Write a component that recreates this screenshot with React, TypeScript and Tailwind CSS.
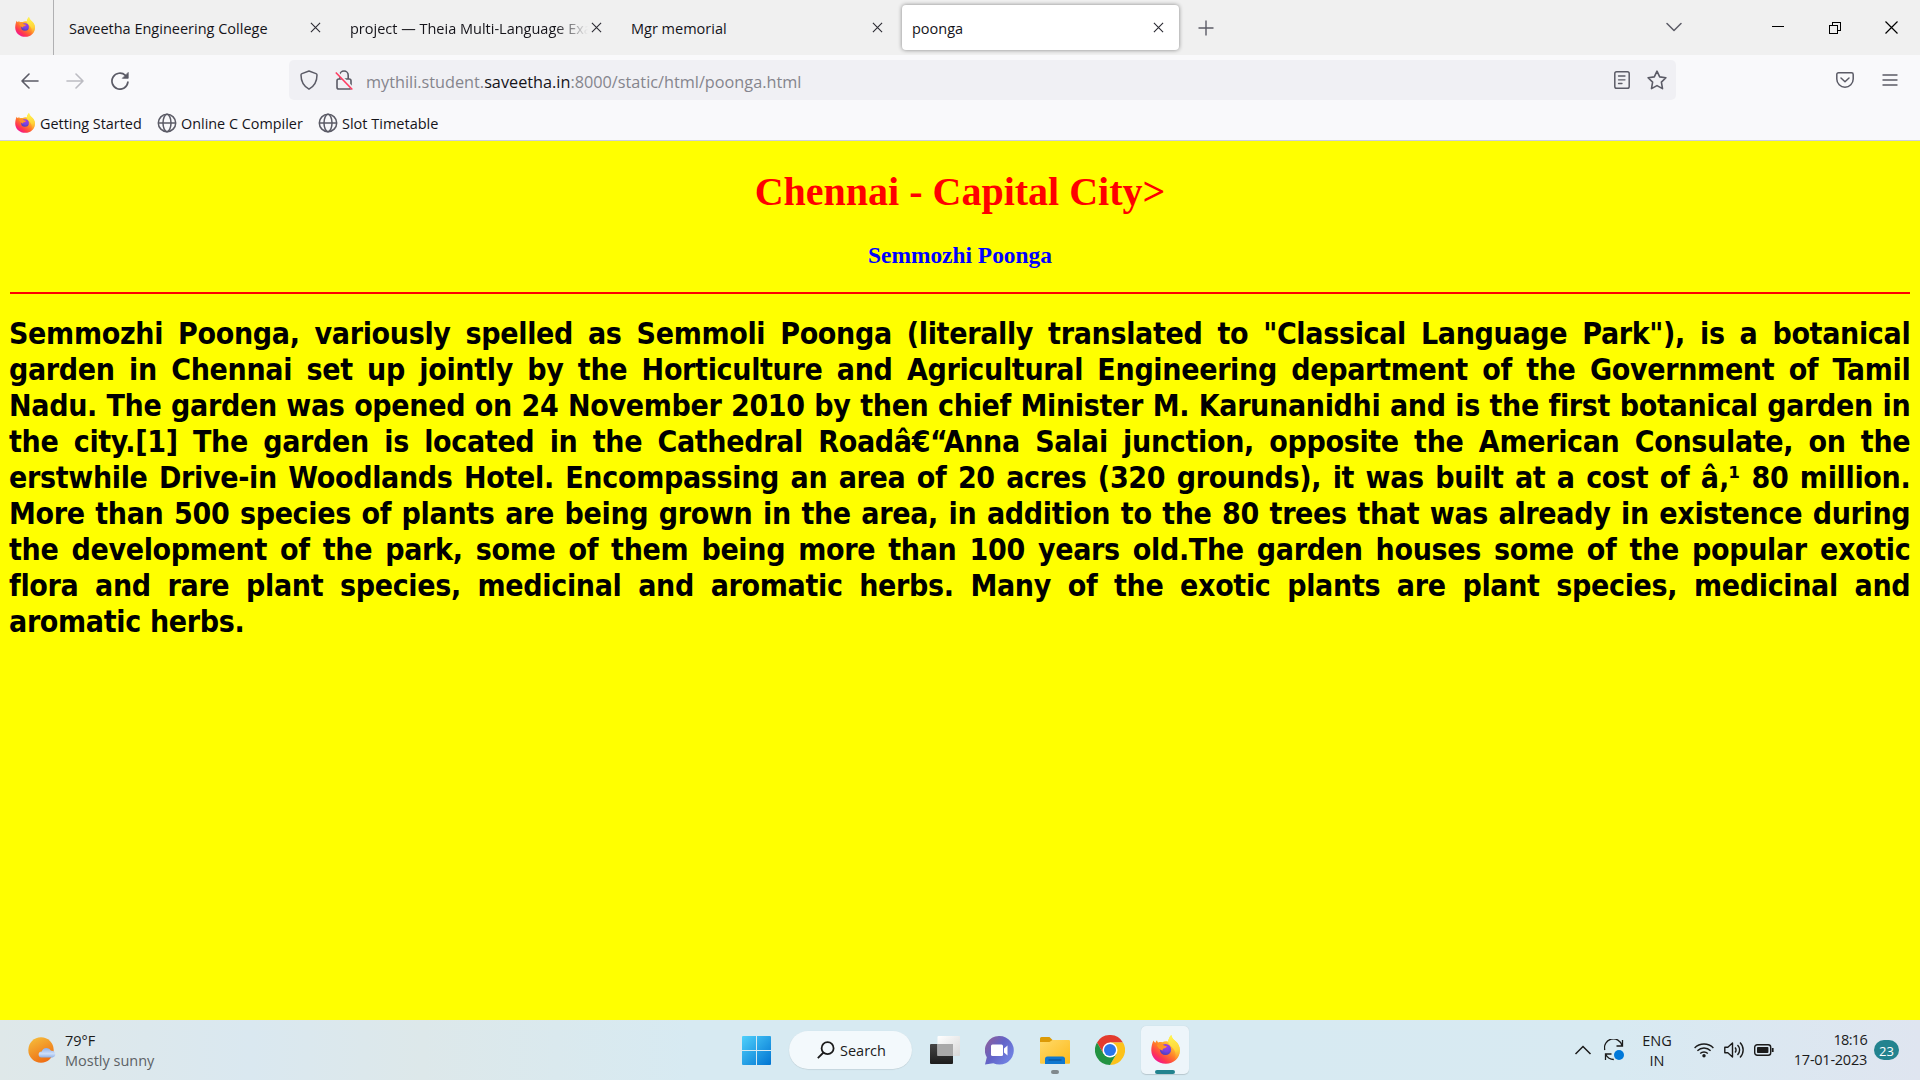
import type { ReactNode } from "react";

function Firefox({ id, className }: { id: string; className: string }) {
  return (
    <svg viewBox="0 0 28 28" className={className}>
      <defs>
        <linearGradient id={`${id}-body`} x1="0.85" y1="0.1" x2="0.2" y2="0.95">
          <stop offset="0" stopColor="#fff044" />
          <stop offset="0.3" stopColor="#ffbd2f" />
          <stop offset="0.55" stopColor="#ff7a2a" />
          <stop offset="0.8" stopColor="#ff3750" />
          <stop offset="1" stopColor="#f0139a" />
        </linearGradient>
        <linearGradient id={`${id}-flame`} x1="0.5" y1="0" x2="0.6" y2="1">
          <stop offset="0" stopColor="#fff44f" />
          <stop offset="0.6" stopColor="#ffd43a" />
          <stop offset="1" stopColor="#ff9a2e" stopOpacity="0.2" />
        </linearGradient>
        <radialGradient id={`${id}-core`} cx="0.6" cy="0.25" r="0.8">
          <stop offset="0" stopColor="#a63ae6" />
          <stop offset="0.55" stopColor="#7542e5" />
          <stop offset="1" stopColor="#4a3fb0" />
        </radialGradient>
      </defs>
      <path
        d="M2.4 5.2c.5 1 1.1 1.8 1.9 2.3.3-1 .8-1.8 1.5-2.4.1 1 .5 1.7 1.1 2.2 1.3-.5 2.7-.6 4-.3 1.8-1 3.8-1.2 5.6-.6.5-2.7 1.4-4.8 3.1-6.4.4 2.5 1.9 4.3 3.9 5.9 2.6 2 4.4 5.3 4.4 9.1 0 7.3-6 12.8-13.6 12.8S.3 22.2.3 15c0-3.7.7-6.9 2.1-9.8z"
        fill={`url(#${id}-body)`}
      />
      <path
        d="M16.4 6.600c.5-2.700 1.500-5 3.200-6.600.4 2.500 1.900 4.300 3.900 5.900 2.600 2 4.400 5.300 4.400 9.100-.1 4-2.200 7.500-5.200 9.500 1.800-4.500 1.300-8.600-1.500-11.700-1.700-1.900-4.200-3.300-4.800-6.200z"
        fill={`url(#${id}-flame)`}
      />
      <circle cx="14" cy="14" r="5.4" fill={`url(#${id}-core)`} />
      <path
        d="M5.600 9.600c1.900-1.400 4.500-1.300 6.300.1.900.7 2.100.9 3.400 1-.3 1.500-1.500 2.100-2.900 2.400-1 .3-1.300 1-1 1.800-2.600-.4-4.600-2.400-5.800-5.300z"
        fill="#ff9328"
      />
    </svg>
  );
}

function Globe() {
  return (
    <svg viewBox="0 0 20 20" className="size-5 shrink-0" fill="none" stroke="#5b5b66" strokeWidth="1.5">
      <circle cx="10" cy="10" r="8.7" />
      <ellipse cx="10" cy="10" rx="4" ry="8.7" />
      <path d="M1.3 10h17.4" />
    </svg>
  );
}

function Tab({ title, active, fade }: { title: string; active?: boolean; fade?: boolean }) {
  return (
    <div
      className={
        active
          ? "mx-0.5 flex h-[45px] w-[277px] shrink-0 items-center rounded bg-white pl-2.5 shadow-[0_0_4px_rgba(0,0,0,0.45)]"
          : "mx-0.5 flex h-[45px] w-[277px] shrink-0 items-center pl-2.5"
      }
    >
      <span
        className={
          fade
            ? "w-[241px] overflow-hidden pt-0.5 whitespace-nowrap [mask-image:linear-gradient(to_right,black_205px,transparent_238px)]"
            : "w-[241px] overflow-hidden pt-0.5 whitespace-nowrap"
        }
      >
        {title}
      </span>
      <svg viewBox="0 0 12 12" className="size-[11px] shrink-0" fill="none" stroke="#2b2a33" strokeWidth="1.2">
        <path d="M1 1l10 10M11 1L1 11" />
      </svg>
    </div>
  );
}

function Cell({ className, children }: { className: string; children: ReactNode }) {
  return <div className={`flex h-full shrink-0 items-center justify-center ${className}`}>{children}</div>;
}

function TabBar() {
  return (
    <div className="flex h-[55px] items-center bg-[#f0f0f0] text-[14.5px] text-[#15141a]">
      <div className="mr-[3px] flex h-full w-[54px] items-center border-r border-[#b0b0b2] pl-[15px]">
        <Firefox id="pin" className="mb-0.5 size-5" />
      </div>
      <Tab title="Saveetha Engineering College" />
      <Tab title="project — Theia Multi-Language Exa" fade />
      <Tab title="Mgr memorial" />
      <Tab title="poonga" active />
      <Cell className="w-[49px]">
        <svg viewBox="0 0 16 16" className="size-4" stroke="#5b5b66" strokeWidth="1.4">
          <path d="M8 .5v15M.5 8h15" />
        </svg>
      </Cell>
      <Cell className="ml-auto w-[48px]">
        <svg viewBox="0 0 16 10" className="mb-0.5 h-2.5 w-4" fill="none" stroke="#5b5b66" strokeWidth="1.5" strokeLinecap="round" strokeLinejoin="round">
          <path d="M1 1.5l7 7 7-7" />
        </svg>
      </Cell>
      <Cell className="ml-[52px] w-[56px]">
        <div className="mb-0.5 h-px w-3 bg-black" />
      </Cell>
      <Cell className="w-[57px]">
        <svg viewBox="0 0 12 12" className="size-3" fill="none" stroke="#000" shapeRendering="crispEdges">
          <path d="M.5 3.5h8v8h-8zM3.5 3.5v-3h8v8h-3" />
        </svg>
      </Cell>
      <Cell className="w-[57px]">
        <svg viewBox="0 0 13 13" className="size-[13px]" stroke="#000" strokeWidth="1.2">
          <path d="M.5 .5l12 12M12.5 .5l-12 12" />
        </svg>
      </Cell>
    </div>
  );
}

function NavBar() {
  return (
    <div className="flex h-[50px] items-center">
      <div className="flex w-[289px] items-center pt-px pl-[21px]">
        <svg viewBox="0 0 18 16" className="h-4 w-[18px]" fill="none" stroke="#5b5b66" strokeWidth="1.6" strokeLinecap="round" strokeLinejoin="round">
          <path d="M17 8H1M8 1L1 8l7 7" />
        </svg>
        <svg viewBox="0 0 18 16" className="ml-[27px] h-4 w-[18px]" fill="none" stroke="#bcbcc2" strokeWidth="1.6" strokeLinecap="round" strokeLinejoin="round">
          <path d="M1 8h16M10 1l7 7-7 7" />
        </svg>
        <svg viewBox="0 0 18 18" className="ml-[27px] size-[18px]" fill="none" stroke="#5b5b66" strokeWidth="1.7" strokeLinecap="round">
          <path d="M16.9 10.2A8 8 0 1 1 14.4 3.3" />
          <path d="M17.2 .8v5.5h-5.5z" fill="#5b5b66" strokeWidth="0.8" strokeLinejoin="round" />
        </svg>
      </div>
      <div className="flex h-10 w-[1387px] items-center rounded-[5px] bg-[#f0f0f4]">
        <svg viewBox="0 0 18 20" className="ml-[11px] h-5 w-[18px]" fill="none" stroke="#5b5b66" strokeWidth="1.5" strokeLinejoin="round">
          <path d="M9 1l7 2.6c.8.3 1 .7 1 1.4 0 6.2-2.3 11-8 14.2C3.3 16 1 11.2 1 5c0-.7.2-1.1 1-1.4z" />
        </svg>
        <svg viewBox="0 0 18 20" className="ml-[17px] h-5 w-[18px]" fill="none" stroke="#5b5b66" strokeWidth="1.6">
          <rect x="2" y="9" width="14" height="10" rx="1.8" />
          <path d="M4.8 9V5.2a4.2 4.2 0 0 1 8.4 0V9" />
          <path d="M1.5 2L17.5 18.5" stroke="#f0f0f4" strokeWidth="3" />
          <path d="M.8 2.5L17.3 19.5" stroke="#ff3b61" strokeWidth="1.6" />
        </svg>
        <span className="ml-[13px] pt-[5px] text-[16.25px] whitespace-nowrap text-[#85858d]">
          mythili.student.<span className="text-[#15141a]">saveetha.in</span>:8000/static/html/poonga.html
        </span>
        <svg viewBox="0 0 16 18" className="ml-auto h-[18px] w-4" fill="none" stroke="#5b5b66" strokeWidth="1.5" strokeLinecap="round">
          <rect x=".8" y=".8" width="14.4" height="16.4" rx="1.8" />
          <path d="M4.5 5h6.5M4.5 8.8h6.500M4.5 12.500h3.500" strokeWidth="1.3" />
        </svg>
        <svg viewBox="0 0 20 20" className="mr-[9px] ml-[17px] size-5" fill="none" stroke="#5b5b66" strokeWidth="1.6" strokeLinejoin="round">
          <path d="M10 1.2l2.7 5.7 6.2.8-4.5 4.4 1.1 6.5L10 15.6l-5.5 3 1.1-6.5L1.1 7.7l6.2-.8z" />
        </svg>
      </div>
      <svg viewBox="0 0 18 16" className="mr-7 ml-auto h-4 w-[18px]" fill="none" stroke="#5b5b66" strokeWidth="1.5" strokeLinecap="round" strokeLinejoin="round">
        <path d="M2.5.8h13c1 0 1.7.7 1.7 1.7V7a8.200 8.200 0 0 1-16.400 0V2.500C.8 1.500 1.500.8 2.500.8z" />
        <path d="M5 6l4 3.800L13 6" />
      </svg>
      <svg viewBox="0 0 16 14" className="mr-[22px] h-3.5 w-4" stroke="#5b5b66" strokeWidth="1.4" strokeLinecap="round">
        <path d="M1 2h14M1 7h14M1 12h14" />
      </svg>
    </div>
  );
}

function Bookmarks() {
  return (
    <div className="flex h-9 items-center border-b border-[#cfcfd8] pt-px pl-[15px] text-[14.4px] text-[#15141a]">
      <Firefox id="bm" className="size-5 shrink-0" />
      <span className="ml-[5px] w-[117px] pt-px whitespace-nowrap">Getting Started</span>
      <Globe />
      <span className="ml-[4px] w-[137px] pt-px whitespace-nowrap">Online C Compiler</span>
      <Globe />
      <span className="ml-[4px] pt-px text-[14.5px] whitespace-nowrap">Slot Timetable</span>
    </div>
  );
}

const LINES = [
  'Semmozhi Poonga, variously spelled as Semmoli Poonga (literally translated to "Classical Language Park"), is a botanical',
  "garden in Chennai set up jointly by the Horticulture and Agricultural Engineering department of the Government of Tamil",
  "Nadu. The garden was opened on 24 November 2010 by then chief Minister M. Karunanidhi and is the first botanical garden in",
  "the city.[1] The garden is located in the Cathedral Roadâ€“Anna Salai junction, opposite the American Consulate, on the",
  "erstwhile Drive-in Woodlands Hotel. Encompassing an area of 20 acres (320 grounds), it was built at a cost of â‚¹ 80 million.",
  "More than 500 species of plants are being grown in the area, in addition to the 80 trees that was already in existence during",
  "the development of the park, some of them being more than 100 years old.The garden houses some of the popular exotic",
  "flora and rare plant species, medicinal and aromatic herbs. Many of the exotic plants are plant species, medicinal and",
];

function Page() {
  return (
    <main className="h-[879px] bg-[#ffff00] px-2.5 pt-7">
      <h1 className="text-center font-['Liberation_Serif',serif] text-[40px] leading-[46px] font-bold text-[#ff0000]">
        Chennai - Capital City&gt;
      </h1>
      <h3 className="mt-[27px] text-center font-['Liberation_Serif',serif] text-[23.4px] leading-[26px] font-bold text-[#0000ff]">
        Semmozhi Poonga
      </h3>
      <div className="mt-6 h-0.5 bg-[#ff0000]" />
      <div className="-ml-px mt-[22px] font-['DejaVu_Sans_Condensed',sans-serif] text-[30px] leading-9 font-bold tracking-[-0.33px] text-black">
        {LINES.map((line) => (
          <p key={line} className="-mr-[0.33px] whitespace-nowrap [text-align-last:justify]">
            {line}
          </p>
        ))}
        <p>aromatic herbs.</p>
      </div>
    </main>
  );
}

function Taskbar() {
  return (
    <footer className="flex h-[60px] items-center bg-[linear-gradient(90deg,#dfe8e9_0%,#dae8f0_13%,#dde8ea_22%,#d7eaf2_36%,#d7eaf2_66%,#d8eaf2_84%,#dfe5f0_100%)] text-[14.5px] leading-5 text-[#1b1b1b]">
      <div className="flex w-[742px] items-center pl-7">
        <svg viewBox="0 0 28 26" className="h-[26px] w-7">
          <defs>
            <linearGradient id="sun" x1="0.2" y1="0" x2="0.7" y2="1">
              <stop offset="0" stopColor="#f5bb3a" />
              <stop offset="1" stopColor="#ee6a12" />
            </linearGradient>
            <linearGradient id="cloud" x1="0" y1="0" x2="0" y2="1">
              <stop offset="0" stopColor="#8eb0ec" />
              <stop offset="0.6" stopColor="#cfdff8" />
              <stop offset="1" stopColor="#8fb0e6" />
            </linearGradient>
          </defs>
          <circle cx="13" cy="13" r="12.7" fill="url(#sun)" />
          <path d="M13.5 20.5a3 3 0 0 1 .3-6.1 5 5 0 0 1 9.2-.6 3.4 3.4 0 0 1 1.6 6.7z" fill="url(#cloud)" />
        </svg>
        <div className="ml-[9px] pt-0.5">
          <div>79°F</div>
          <div className="text-[#5c6265]">Mostly sunny</div>
        </div>
      </div>
      <svg viewBox="0 0 29 29" className="size-[29px]">
        <defs>
          <linearGradient id="win" x1="0" y1="0" x2="1" y2="1">
            <stop offset="0" stopColor="#4fd0fb" />
            <stop offset="1" stopColor="#0074d2" />
          </linearGradient>
        </defs>
        <path d="M1 0h13v14H0V1q0-1 1-1zM15 0h13q1 0 1 1v13H15zM0 15h14v14H1q-1 0-1-1zM15 15h14v13q0 1-1 1H15z" fill="url(#win)" />
      </svg>
      <div className="ml-[18px] flex h-[38px] w-[123px] items-center rounded-full bg-[#f3f9fc] pl-[28px] shadow-[0_0.5px_1px_rgba(0,0,0,0.15)]">
        <svg viewBox="0 0 18 18" className="size-[18px]" fill="none" stroke="#1b1b1b" strokeWidth="1.8">
          <circle cx="10.6" cy="7.2" r="6" />
          <path d="M6.5 11.5L.8 17.2" />
        </svg>
        <span className="ml-[5px] pt-0.5">Search</span>
      </div>
      <svg viewBox="0 0 30 28" className="ml-[18px] h-7 w-[30px]">
        <defs>
          <linearGradient id="dark" x1="0" y1="0" x2="0" y2="1">
            <stop offset="0" stopColor="#454545" />
            <stop offset="1" stopColor="#1c1c1c" />
          </linearGradient>
          <linearGradient id="light" x1="0" y1="0" x2="1" y2="1">
            <stop offset="0" stopColor="#ffffff" />
            <stop offset="1" stopColor="#d8d8d8" />
          </linearGradient>
        </defs>
        <rect y="8" width="23" height="20" rx="1" fill="url(#dark)" />
        <rect x="7.5" y="0" width="22.5" height="20" rx="1" fill="url(#light)" />
        <rect x="7.5" y="8" width="15.5" height="12" fill="#a9a9a9" />
      </svg>
      <svg viewBox="0 0 30 29" className="ml-[25px] h-[29px] w-[30px]">
        <defs>
          <linearGradient id="chat" x1="0.1" y1="0.1" x2="0.9" y2="0.7">
            <stop offset="0" stopColor="#8a5f9f" />
            <stop offset="0.5" stopColor="#6264c8" />
            <stop offset="1" stopColor="#6f7fe0" />
          </linearGradient>
        </defs>
        <path d="M14.5 0a14.3 14.3 0 1 1-6.2 27.2L0 28.5l1.8-7.2A14.3 14.3 0 0 1 14.5 0z" fill="url(#chat)" />
        <rect x="6" y="8.5" width="12" height="11.5" rx="1.5" fill="#fff" />
        <path d="M19 12.5l3.5-3v10l-3.5-3z" fill="#fff" />
      </svg>
      <div className="relative ml-[25px] flex h-full w-[30px] items-center justify-center">
        <svg viewBox="0 0 30 27" className="mt-px h-[27px] w-[30px]">
          <defs>
            <linearGradient id="folder" x1="0" y1="0" x2="1" y2="1">
              <stop offset="0" stopColor="#ffd968" />
              <stop offset="1" stopColor="#fdbb1c" />
            </linearGradient>
          </defs>
          <path d="M0 1.5Q0 0 1.5 0h8l3.5 3.5H16V10H0z" fill="#dc9a06" />
          <path d="M0 5h9.5l3-2H29q1 0 1 1v22q0 .8-1 .8H1q-1 0-1-.8z" fill="url(#folder)" />
          <path d="M5 27v-5q0-2.5 2.5-2.5h15q2.5 0 2.5 2.5v5z" fill="#0f78d0" />
          <path d="M8.5 23h13" stroke="#0a4a8c" strokeWidth="1" />
        </svg>
        <div className="absolute bottom-1.5 h-1 w-2 rounded-full bg-[#80898d]" />
      </div>
      <svg viewBox="0 0 30 30" className="ml-[25px] size-[30px]">
        <path d="M2 7.5A15 15 0 0 1 28 7.5H15L8.5 18.7z" fill="#e33b2e" />
        <path d="M28 7.5A15 15 0 0 1 15 30l6.5-11.2L15 7.5z" fill="#fcc21b" />
        <path d="M15 30A15 15 0 0 1 2 7.5l6.5 11.3 13 0z" fill="#229342" />
        <circle cx="15" cy="15" r="7.5" fill="#fff" />
        <circle cx="15" cy="15" r="6" fill="#2a76ea" />
      </svg>
      <div className="relative ml-4 flex size-12 items-center justify-center rounded-[5px] bg-[#edf5fa] shadow-[0_0.5px_1px_rgba(0,0,0,0.15)]">
        <Firefox id="task" className="mb-0.5 size-[29px]" />
        <div className="absolute bottom-0 h-1 w-5 rounded-full bg-[#23838f]" />
      </div>
      <svg viewBox="0 0 18 10" className="mr-3 ml-auto h-2.5 w-[18px]" fill="none" stroke="#1b1b1b" strokeWidth="1.5">
        <path d="M1.5 9L9 1.5 16.5 9" />
      </svg>
      <svg viewBox="0 0 20 22" className="mr-[17px] h-[22px] w-5" fill="none" stroke="#1b1b1b" strokeWidth="1.3">
        <path d="M.8 11A8.8 8.8 0 0 1 18 6.5M18.5 1v6h-6M1.5 21v-6h6M1.8 15.5a9 9 0 0 0 8 5" />
        <circle cx="15" cy="16" r="5" fill="#0078d9" stroke="none" />
      </svg>
      <div className="mr-[21px] w-8 pt-0.5 text-center">
        <div>ENG</div>
        <div>IN</div>
      </div>
      <svg viewBox="0 0 20 16" className="mr-2.5 h-4 w-5" fill="none" stroke="#1b1b1b" strokeWidth="1.4">
        <path d="M.6 6a13.2 13.2 0 0 1 18.8 0M3.4 8.8a9.3 9.3 0 0 1 13.2 0M6.2 11.6a5.4 5.4 0 0 1 7.6 0" />
        <circle cx="10" cy="13.8" r="1.7" fill="#1b1b1b" stroke="none" />
      </svg>
      <svg viewBox="0 0 20 18" className="mr-2.5 h-[18px] w-5" fill="none" stroke="#1b1b1b" strokeWidth="1.4" strokeLinejoin="round">
        <path d="M.8 6.2h3L8.5 2v14l-4.7-4.2h-3z" />
        <path d="M11 6.5a3.5 3.5 0 0 1 0 5M13.5 4a7 7 0 0 1 0 10M16 1.5a10.5 10.5 0 0 1 0 15" />
      </svg>
      <svg viewBox="0 0 20 12" className="mr-[19px] h-3 w-5" fill="none" stroke="#1b1b1b" strokeWidth="1.4">
        <rect x=".7" y=".7" width="16" height="10.6" rx="2.5" />
        <rect x="3" y="3" width="11.4" height="6" rx=".8" fill="#1b1b1b" stroke="none" />
        <path d="M18.7 4v4" strokeWidth="1.8" />
      </svg>
      <div className="w-[74px] text-right tracking-[-0.25px] whitespace-nowrap">
        <div className="tracking-[-0.7px]">18:16</div>
        <div>17-01-2023</div>
      </div>
      <div className="mr-[21px] ml-[7px] flex h-5 w-[25px] items-center justify-center rounded-full bg-[#23838f] pt-px text-[13px] text-white">
        23
      </div>
    </footer>
  );
}

export default function App() {
  return (
    <div className="h-[1080px] w-[1920px] overflow-hidden bg-[#f9f9fb] font-['Open_Sans',sans-serif]">
      <TabBar />
      <NavBar />
      <Bookmarks />
      <Page />
      <Taskbar />
    </div>
  );
}
